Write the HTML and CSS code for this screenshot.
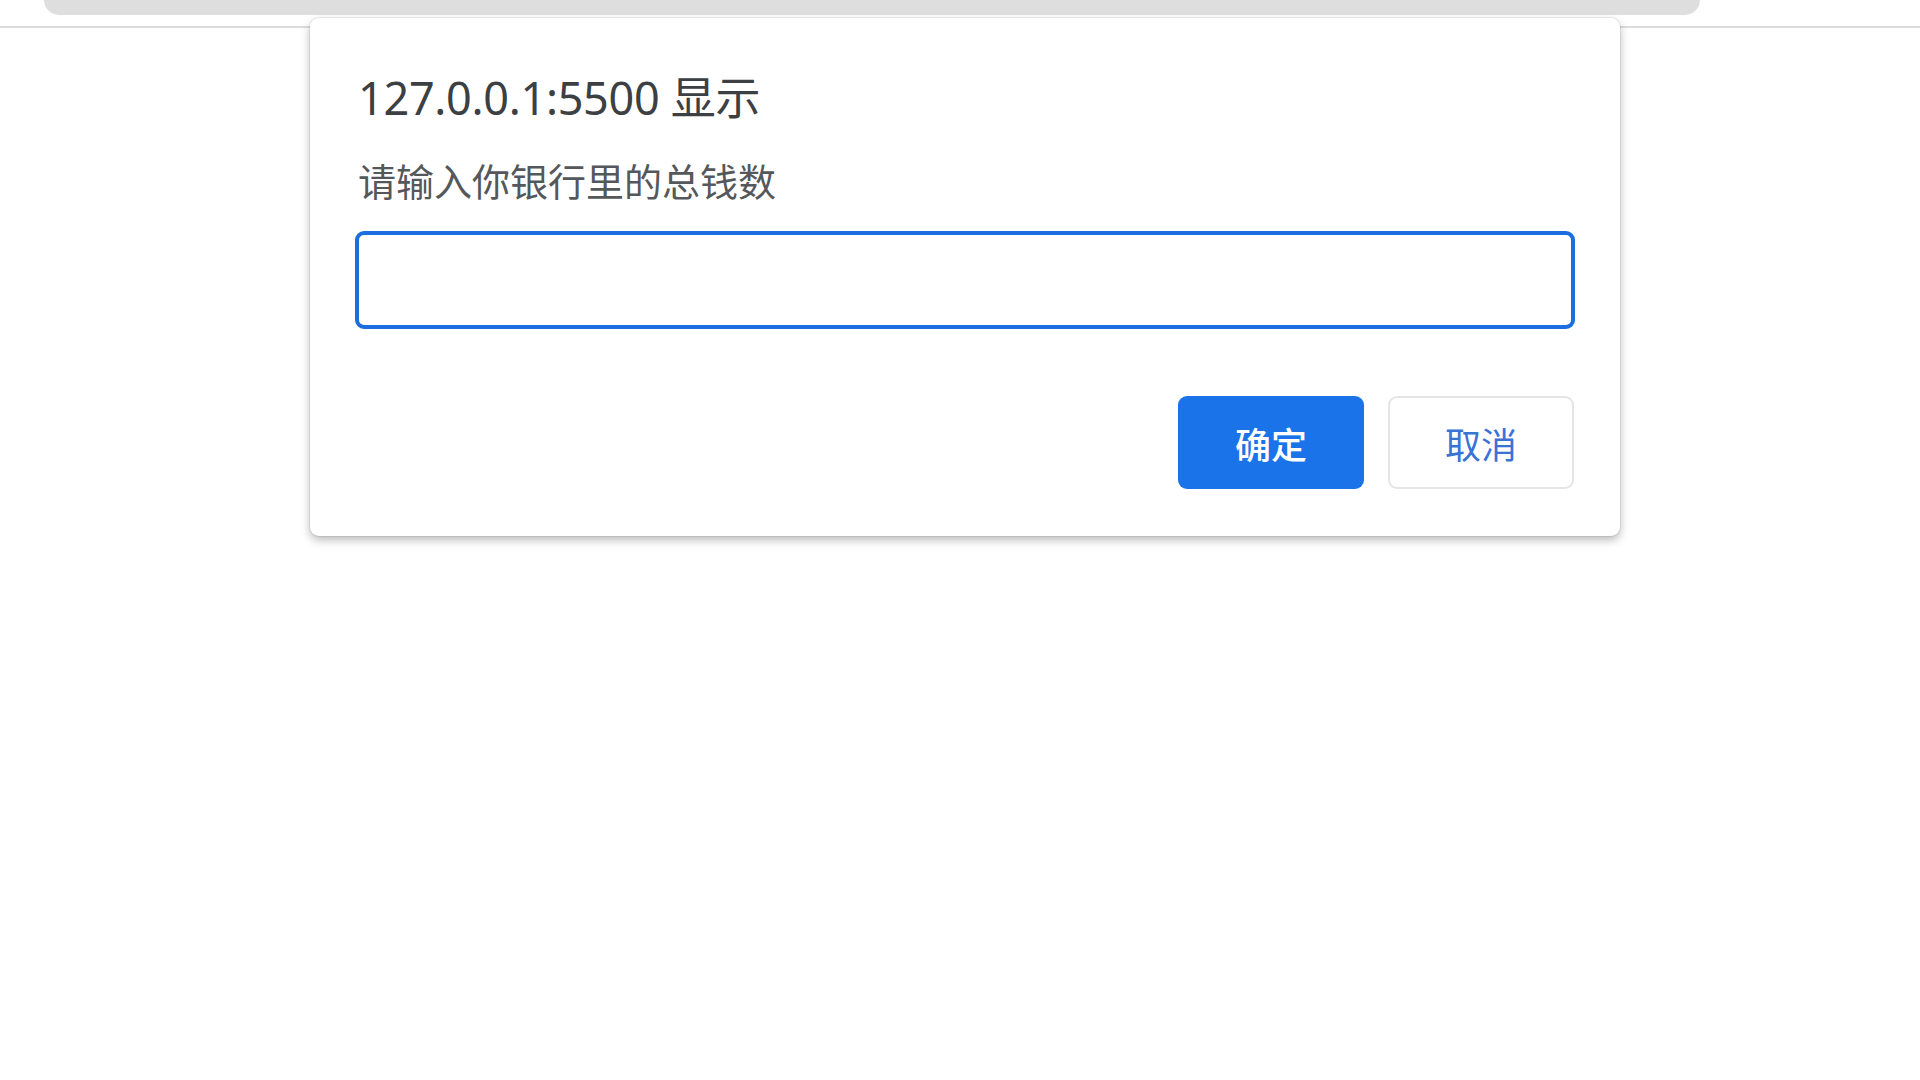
FILE: index.html
```html
<!DOCTYPE html>
<html lang="zh-CN">
<head>
<meta charset="utf-8">
<title>prompt</title>
<link rel="stylesheet" href="styles.css">
</head>
<body>
<div class="chrome">
  <div class="tabbar"></div>
  <div class="toolbar-line"></div>
</div>
<div class="dialog">
  <div class="title">127.0.0.1:5500 显示</div>
  <div class="message">请输入你银行里的总钱数</div>
  <input class="field" type="text" autofocus>
  <div class="actions">
    <button class="btn btn-primary">确定</button>
    <button class="btn btn-secondary">取消</button>
  </div>
</div>
</body>
</html>
```
FILE: styles.css
```css
* { box-sizing: border-box; }
html, body {
  margin: 0;
  padding: 0;
  background: #ffffff;
  width: 1920px;
  height: 1080px;
  overflow: hidden;
  font-family: "Noto Sans", "Noto Sans CJK SC", sans-serif;
}
.chrome {
  position: relative;
  height: 28px;
}
.tabbar {
  position: absolute;
  left: 44px;
  top: 0;
  width: 1656px;
  height: 15px;
  background: #dedede;
  border-radius: 0 0 24px 24px;
}
.toolbar-line {
  position: absolute;
  left: 0;
  right: 0;
  top: 26px;
  height: 2px;
  background: #dcdcdc;
}
.dialog {
  position: absolute;
  left: 310px;
  top: 18px;
  width: 1310px;
  background: #ffffff;
  border-radius: 9px;
  box-shadow: 0 0 0 1px rgba(0,0,0,0.06), 0 4px 10px rgba(0,0,0,0.28);
  padding: 50px 45px 47px 45px;
  display: flex;
  flex-direction: column;
}
.title {
  font-size: 45px;
  line-height: 60px;
  color: #3c4043;
  padding-left: 3px;
  letter-spacing: -0.3px;
}
.message {
  margin-top: 27px;
  font-size: 38px;
  line-height: 52px;
  color: #55585b;
  padding-left: 3px;
}
.field {
  margin-top: 24px;
  width: 1220px;
  height: 98px;
  border: 4px solid #1a6ee0;
  border-radius: 9px;
  outline: none;
  background: #fff;
  font-size: 37px;
  padding: 0 16px;
}
.actions {
  margin-top: 67px;
  display: flex;
  justify-content: flex-end;
  gap: 24px;
  padding-right: 1px;
}
.btn {
  width: 186px;
  height: 93px;
  border-radius: 9px;
  font-family: "Noto Sans CJK SC", sans-serif;
  font-size: 36px;
  cursor: pointer;
  padding: 0;
}
.btn-primary {
  background: #1a73e8;
  border: none;
  color: #ffffff;
  font-weight: 500;
}
.btn-secondary {
  background: #ffffff;
  border: 2px solid #e3e5e8;
  color: #3a73d6;
  font-weight: 400;
}
```
